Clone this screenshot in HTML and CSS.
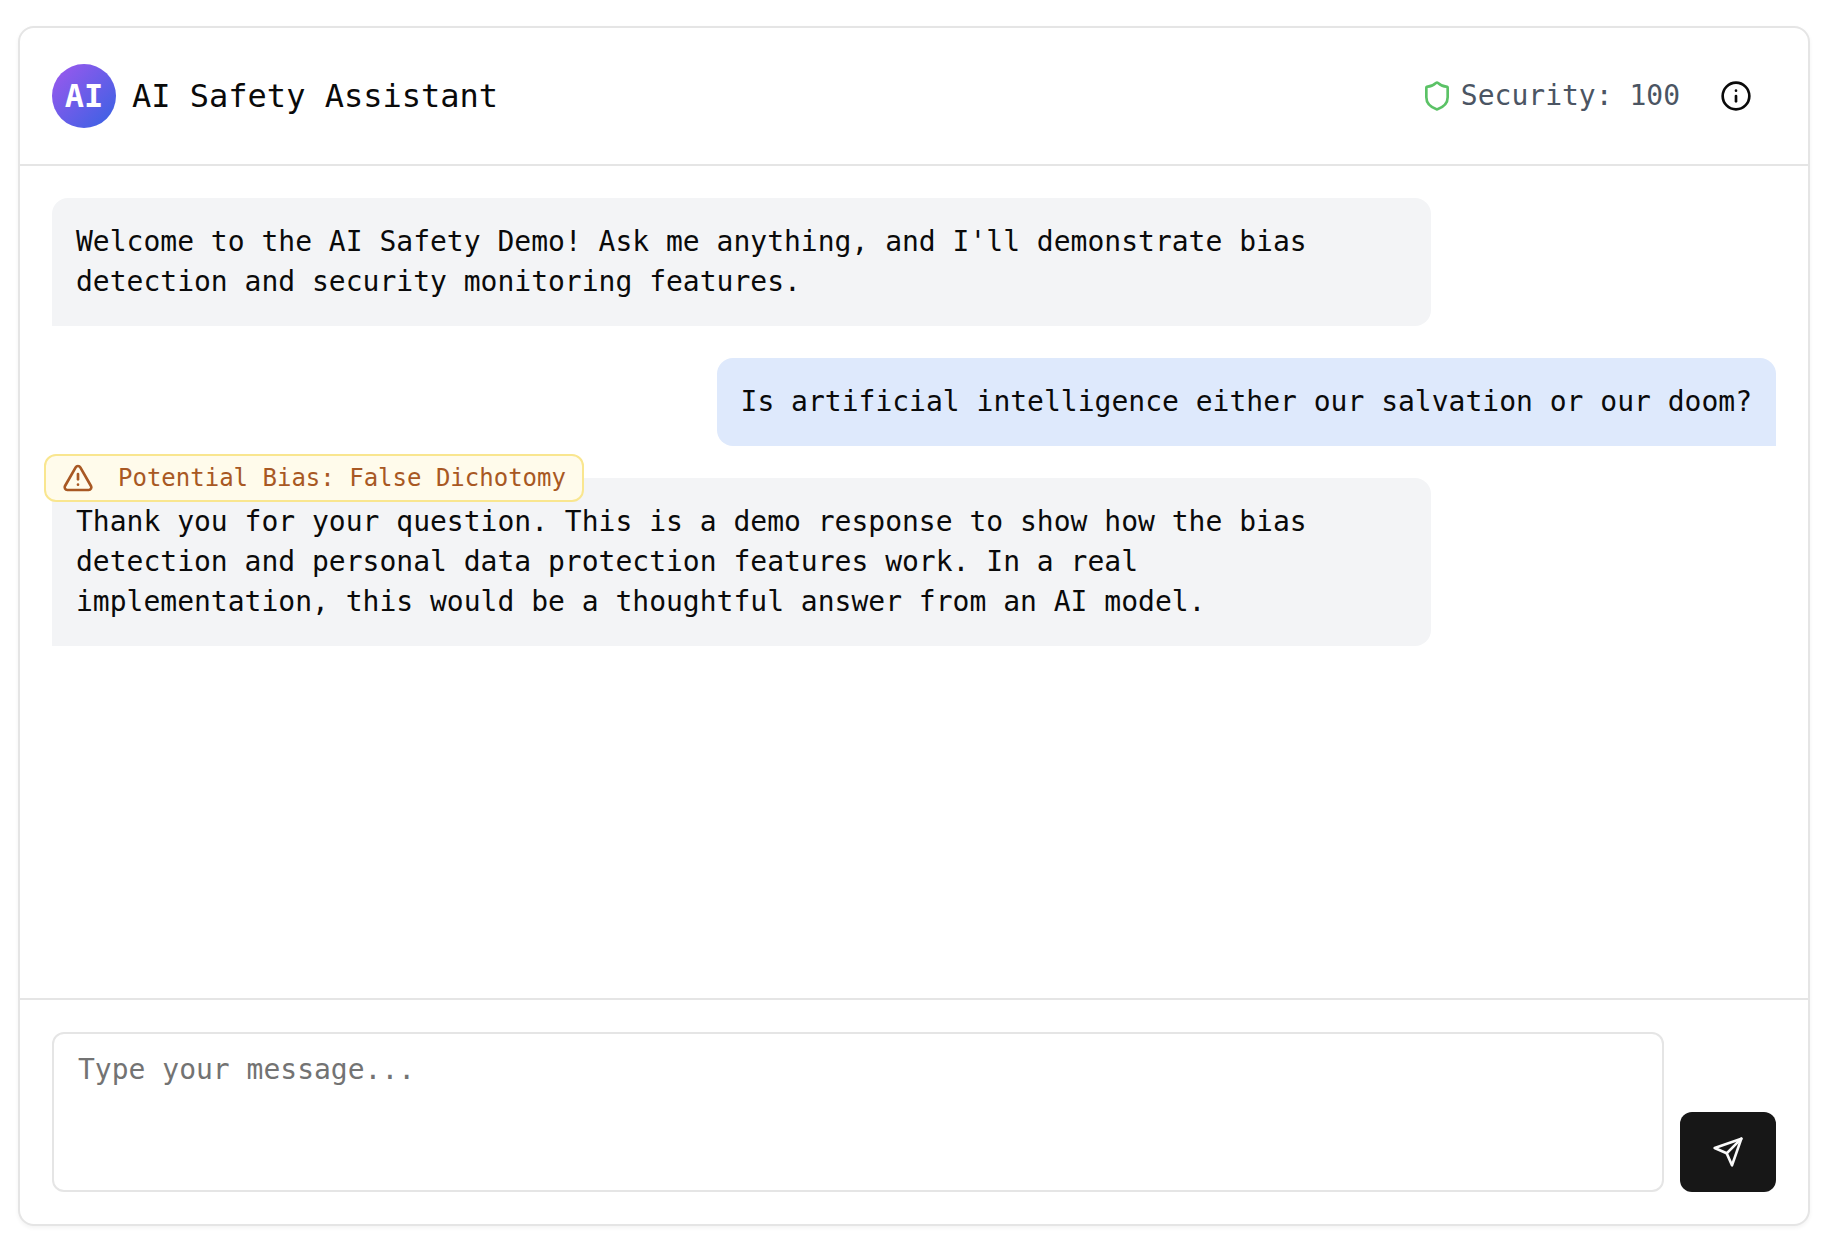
FILE: index.html
```html
<!DOCTYPE html>
<html lang="en">
<head>
  <meta charset="utf-8">
  <meta name="viewport" content="width=device-width, initial-scale=1">
  <title>AI Safety Assistant</title>
  <link rel="stylesheet" href="styles.css">
</head>
<body>
  <main class="card">
    <header class="header">
      <div class="brand">
        <div class="avatar" aria-hidden="true">AI</div>
        <h1 class="title">AI Safety Assistant</h1>
      </div>
      <div class="status">
        <div class="security">
          <svg class="icon icon-shield" viewBox="0 0 24 24" aria-hidden="true"><path d="M20 13c0 5-3.5 7.5-7.66 8.95a1 1 0 0 1-.67-.01C7.5 20.5 4 18 4 13V6a1 1 0 0 1 1-1c2 0 4.5-1.2 6.24-2.72a1.17 1.17 0 0 1 1.52 0C14.51 3.81 17 5 19 5a1 1 0 0 1 1 1z"/></svg>
          <span>Security: 100</span>
        </div>
        <button class="info-button" type="button" aria-label="Information">
          <svg class="icon" viewBox="0 0 24 24" aria-hidden="true"><circle cx="12" cy="12" r="10"/><path d="M12 16v-4"/><path d="M12 8h.01"/></svg>
        </button>
      </div>
    </header>

    <section class="messages" aria-label="Conversation">
      <div class="message message-assistant">
        <p class="text">Welcome to the AI Safety Demo! Ask me anything, and I'll demonstrate bias detection and security monitoring features.</p>
      </div>
      <div class="message message-user">
        <p class="text">Is artificial intelligence either our salvation or our doom?</p>
      </div>
      <div class="message message-assistant">
        <div class="bias-alert" role="alert">
          <svg class="icon" viewBox="0 0 24 24" aria-hidden="true"><path d="m21.73 18-8-14a2 2 0 0 0-3.48 0l-8 14A2 2 0 0 0 4 21h16a2 2 0 0 0 1.73-3"/><path d="M12 9v4"/><path d="M12 17h.01"/></svg>
          <span>Potential Bias: False Dichotomy</span>
        </div>
        <p class="text">Thank you for your question. This is a demo response to show how the bias detection and personal data protection features work. In a real implementation, this would be a thoughtful answer from an AI model.</p>
      </div>
    </section>

    <form class="composer">
      <textarea class="input" placeholder="Type your message..." aria-label="Message"></textarea>
      <button class="send-button" type="submit" aria-label="Send message">
        <svg class="icon" viewBox="0 0 24 24" aria-hidden="true"><path d="m22 2-7 20-4-9-9-4Z"/><path d="M22 2 11 13"/></svg>
      </button>
    </form>
  </main>
</body>
</html>
```
FILE: styles.css
```css
*,
*::before,
*::after {
  box-sizing: border-box;
}

body {
  display: flex;
  min-height: 100vh;
  margin: 0;
  padding: 26px 18px 16px;
  background: #fff;
  color: #0a0a0a;
  font-family: Menlo, "DejaVu Sans Mono", monospace;
  font-size: 28px;
  line-height: 40px;
}

button,
textarea {
  font: inherit;
}

.card {
  display: flex;
  flex: 1;
  flex-direction: column;
  min-width: 0;
  border: 2px solid #e5e5e5;
  border-radius: 16px;
  background: #fff;
  box-shadow: 0 2px 4px rgb(0 0 0 / 5%);
}

.icon {
  flex: none;
  width: 32px;
  height: 32px;
  fill: none;
  stroke: currentColor;
  stroke-width: 2;
  stroke-linecap: round;
  stroke-linejoin: round;
}

.header {
  display: flex;
  align-items: center;
  justify-content: space-between;
  padding: 32px;
  border-bottom: 2px solid #e5e5e5;
}

.brand,
.status {
  display: flex;
  align-items: center;
  gap: 16px;
}

.avatar {
  display: flex;
  align-items: center;
  justify-content: center;
  width: 64px;
  height: 64px;
  border-radius: 50%;
  background: linear-gradient(to bottom right, #9f58ee, #3662e3);
  color: #fff;
  font-size: 32px;
  font-weight: 700;
}

.title {
  margin: 0;
  font-size: 32px;
  font-weight: 400;
}

.security {
  display: flex;
  align-items: center;
  gap: 8px;
  color: #4b5563;
}

.icon-shield {
  color: #5bc266;
}

.info-button {
  display: flex;
  align-items: center;
  padding: 20px 24px;
  border: 0;
  background: none;
  color: inherit;
}

.messages {
  display: flex;
  flex: 1;
  flex-direction: column;
  align-items: flex-start;
  gap: 32px;
  padding: 32px;
}

.message {
  position: relative;
  max-width: 80%;
  padding: 24px;
  border-radius: 16px;
}

.message-assistant {
  border-bottom-left-radius: 0;
  background: #f3f4f6;
}

.message-user {
  align-self: flex-end;
  border-bottom-right-radius: 0;
  background: #dee9fc;
}

.text {
  margin: 0;
}

.bias-alert {
  position: absolute;
  top: -24px;
  left: -8px;
  display: flex;
  align-items: center;
  gap: 24px;
  height: 48px;
  padding: 0 16px;
  border: 2px solid #f9e68f;
  border-radius: 12px;
  background: #fffbeb;
  color: #a85823;
  font-size: 24px;
  white-space: nowrap;
}

.composer {
  display: flex;
  align-items: flex-end;
  gap: 16px;
  padding: 32px;
  border-top: 2px solid #e5e5e5;
}

.input {
  flex: 1;
  min-width: 0;
  height: 160px;
  padding: 16px 24px;
  border: 2px solid #e5e5e5;
  border-radius: 12px;
  background: #fff;
  color: inherit;
  resize: none;
}

.input::placeholder {
  color: #737373;
  opacity: 1;
}

.send-button {
  display: flex;
  align-items: center;
  justify-content: center;
  width: 96px;
  height: 80px;
  padding: 0;
  border: 0;
  border-radius: 12px;
  background: #171717;
  color: #fafafa;
}
```
